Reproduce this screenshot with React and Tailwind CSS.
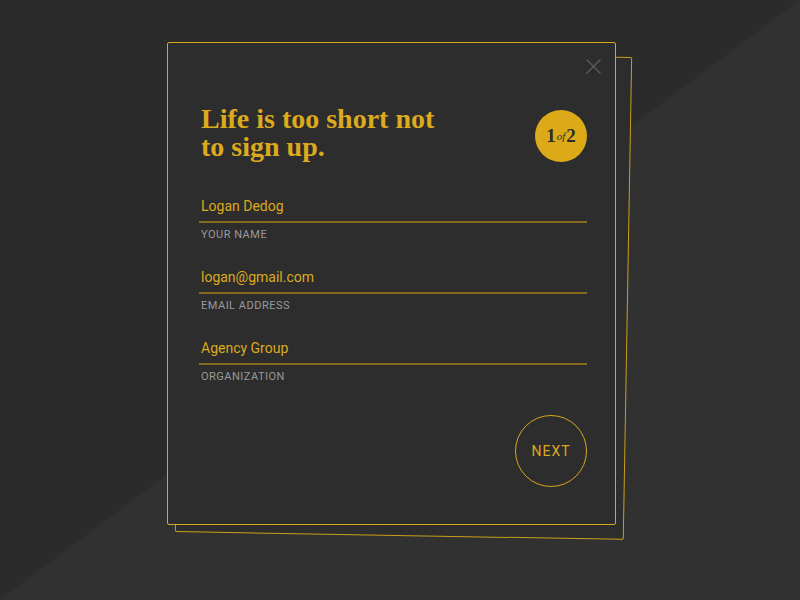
import { useState } from 'react';

const fields = [
    { value: 'Logan Dedog', label: 'Your Name' },
    { value: 'logan@gmail.com', label: 'Email Address' },
    { value: 'Agency Group', label: 'Organization' },
];

export default function App() {
    const [values] = useState(fields);

    return (
        <div className="w-[800px] h-[600px] overflow-hidden bg-[linear-gradient(to_bottom_right,#2b2b2b_50%,#313131_50%)] pt-[42px] pl-[167px] font-['Roboto',sans-serif]">
            <div className="relative w-[449px] h-[483px]">
                {/* stacked sheet behind */}
                <div className="absolute inset-0 translate-x-[12px] translate-y-[11px] rotate-[1deg] border border-[#c9a01c] rounded-[2px] bg-[#2d2d2d]"></div>

                <div className="relative h-full bg-[#2d2d2d] border border-[#d9a81a] rounded-[2px] pl-[31px] pr-[28px] pt-[62px]">
                    {/* close */}
                    <button className="absolute top-[16px] right-[14px] w-[15px] h-[15px]">
                        <svg viewBox="0 0 15 15" className="w-[15px] h-[15px]" fill="none" stroke="#5f5f5f" strokeWidth="1.2">
                            <path d="M0.5 0.5 L14.5 14.5 M14.5 0.5 L0.5 14.5" />
                        </svg>
                    </button>

                    {/* header */}
                    <div className="flex justify-between items-start">
                        <h1 className="pl-[2px] text-[28px] leading-[28px] font-bold text-[#dcaa1c] font-['Liberation_Serif',serif]">
                            Life is too short not<br />to sign up.
                        </h1>
                        <div className="mt-[5px] w-[52px] h-[52px] rounded-full bg-[#dcaa18] flex items-center justify-center text-[#2b2b2b] font-['Liberation_Serif',serif]">
                            <span className="text-[19px] font-bold">1</span>
                            <span className="text-[11px] italic mx-[1px] mt-[1px]">of</span>
                            <span className="text-[19px] font-bold">2</span>
                        </div>
                    </div>

                    {/* fields */}
                    <div className="mt-[34px] flex flex-col gap-[24px]">
                        {values.map((f) => (
                            <div key={f.label}>
                                <div className="pl-[2px] pb-[5px] text-[14px] leading-[20px] text-[#dcaa1c] border-b-2 border-[#866a1f]">
                                    {f.value}
                                </div>
                                <div className="mt-[4px] pl-[2px] text-[11px] leading-[16px] uppercase tracking-[0.5px] text-[#9a9a9a]">
                                    {f.label}
                                </div>
                            </div>
                        ))}
                    </div>

                    {/* next */}
                    <div className="mt-[30px] flex justify-end">
                        <button className="w-[72px] h-[72px] rounded-full border border-[#d9a81a] text-[#dcaa1c] text-[14px] tracking-[1px] flex items-center justify-center">
                            NEXT
                        </button>
                    </div>
                </div>
            </div>
        </div>
    );
}
